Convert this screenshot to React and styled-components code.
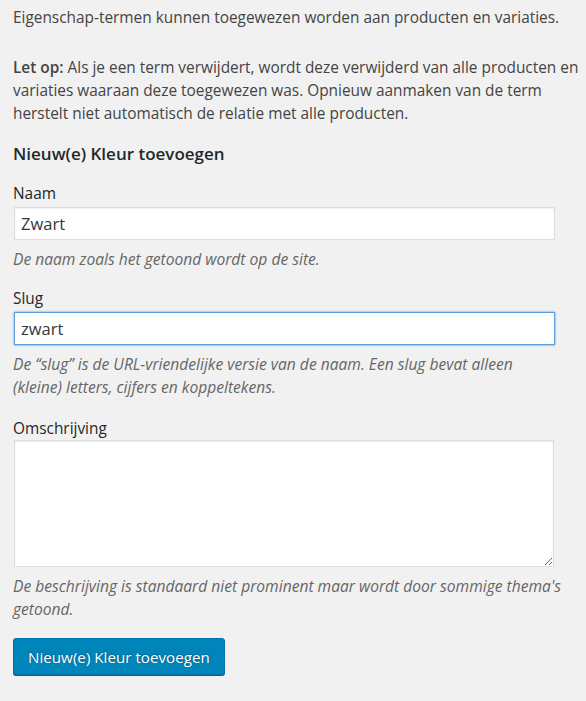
import React from 'react';
import styled, { createGlobalStyle } from 'styled-components';

const GlobalStyle = createGlobalStyle`
  html, body {
    margin: 0;
    padding: 0;
    background: #f1f1f1;
  }
  body {
    font-family: "Open Sans", "Noto Sans", sans-serif;
    color: #444;
  }
`;

const Wrap = styled.div`
  padding: 6px 2px 20px 13px;
  font-size: 15.4px;
  line-height: 23px;
`;

const Intro = styled.p`
  margin: 0 0 27px;
`;

const Note = styled.p`
  margin: 0 0 18px;
  strong {
    font-weight: 600;
  }
`;

const Heading = styled.h3`
  margin: 0 0 17px;
  font-size: 17px;
  font-weight: 600;
  line-height: 22px;
  color: #23282d;
`;

const Field = styled.div`
  margin-bottom: ${p => p.$gap ?? 18}px;
`;

const Label = styled.label`
  display: block;
  color: #23282d;
  margin-bottom: ${p => p.$gap ?? 2}px;
`;

const TextInput = styled.input`
  box-sizing: border-box;
  display: block;
  width: 541px;
  height: 33px;
  margin: 0 0 0 1px;
  padding: 3px 6px;
  font-family: inherit;
  font-size: 16.5px;
  color: #32373c;
  background: #fff;
  border: 1px solid ${p => (p.$focus ? '#5b9dd9' : '#ddd')};
  box-shadow: ${p => (p.$focus ? '0 0 2px rgba(30,140,190,.8)' : 'inset 0 1px 2px rgba(0,0,0,.07)')};
  outline: none;
`;

const TextArea = styled.textarea`
  box-sizing: border-box;
  display: block;
  width: 540px;
  height: 127px;
  margin: 0 0 0 1px;
  background: #fff;
  border: 1px solid #ddd;
  box-shadow: inset 0 1px 2px rgba(0,0,0,.07);
  font-family: inherit;
  outline: none;
`;

const Desc = styled.p`
  margin: 8px 0 0;
  max-width: 550px;
  font-style: italic;
  font-size: 15.6px;
  color: #666;
`;

const Button = styled.button`
  margin-top: 17px;
  height: 37px;
  padding: 0 14px;
  font-family: inherit;
  font-size: 15.2px;
  color: #fff;
  background: #0085ba;
  border: 1px solid #0073aa;
  border-radius: 3px;
  box-shadow: 0 1px 0 #006799;
  text-shadow: 0 -1px 1px #006799, 1px 0 1px #006799;
  cursor: pointer;
`;

const App = () => {
  return (
    <Wrap>
      <GlobalStyle />
      <Intro>Eigenschap-termen kunnen toegewezen worden aan producten en variaties.</Intro>
      <Note>
        <strong>Let op:</strong> Als je een term verwijdert, wordt deze verwijderd van alle producten en variaties waaraan deze toegewezen was. Opnieuw aanmaken van de term herstelt niet automatisch de relatie met alle producten.
      </Note>
      <Heading>Nieuw(e) Kleur toevoegen</Heading>
      <Field $gap={16}>
        <Label htmlFor="tag-name">Naam</Label>
        <TextInput id="tag-name" type="text" defaultValue="Zwart" />
        <Desc>De naam zoals het getoond wordt op de site.</Desc>
      </Field>
      <Field $gap={18}>
        <Label htmlFor="tag-slug">Slug</Label>
        <TextInput id="tag-slug" type="text" defaultValue="zwart" $focus />
        <Desc>De “slug” is de URL-vriendelijke versie van de naam. Een slug bevat alleen (kleine) letters, cijfers en koppeltekens.</Desc>
      </Field>
      <Field $gap={0}>
        <Label htmlFor="tag-description" $gap={0}>Omschrijving</Label>
        <TextArea id="tag-description" />
        <Desc>De beschrijving is standaard niet prominent maar wordt door sommige thema's getoond.</Desc>
      </Field>
      <Button type="button">Nieuw(e) Kleur toevoegen</Button>
    </Wrap>
  );
};

export default App;
